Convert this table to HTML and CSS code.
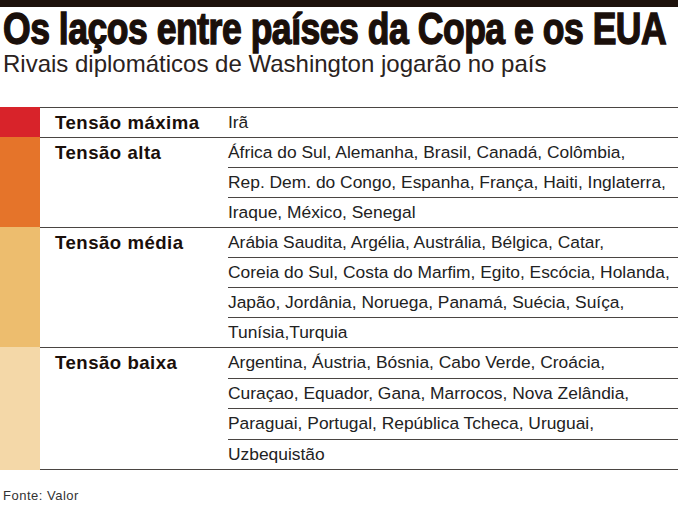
FILE: index.html
```html
<!DOCTYPE html>
<html lang="pt">
<head>
<meta charset="utf-8">
<link rel="stylesheet" href="styles.css">
</head>
<body>
<div class="page">
  <div class="topbar"></div>
  <h1 class="title"><span class="title-text">Os laços entre países da Copa e os EUA</span></h1>
  <p class="subtitle">Rivais diplomáticos de Washington jogarão no país</p>

  <div class="table">
    <div class="group">
      <div class="swatch max"></div>
      <div class="body">
        <div class="label">Tensão máxima</div>
        <div class="values">
          <div class="row">Irã</div>
        </div>
      </div>
    </div>
    <div class="group">
      <div class="swatch alta"></div>
      <div class="body">
        <div class="label">Tensão alta</div>
        <div class="values">
          <div class="row">África do Sul, Alemanha, Brasil, Canadá, Colômbia,</div>
          <div class="row">Rep. Dem. do Congo, Espanha, França, Haiti, Inglaterra,</div>
          <div class="row">Iraque, México, Senegal</div>
        </div>
      </div>
    </div>
    <div class="group">
      <div class="swatch media"></div>
      <div class="body">
        <div class="label">Tensão média</div>
        <div class="values">
          <div class="row">Arábia Saudita, Argélia, Austrália, Bélgica, Catar,</div>
          <div class="row">Coreia do Sul, Costa do Marfim, Egito, Escócia, Holanda,</div>
          <div class="row">Japão, Jordânia, Noruega, Panamá, Suécia, Suíça,</div>
          <div class="row">Tunísia,Turquia</div>
        </div>
      </div>
    </div>
    <div class="group last">
      <div class="swatch baixa"></div>
      <div class="body">
        <div class="label">Tensão baixa</div>
        <div class="values">
          <div class="row">Argentina, Áustria, Bósnia, Cabo Verde, Croácia,</div>
          <div class="row">Curaçao, Equador, Gana, Marrocos, Nova Zelândia,</div>
          <div class="row">Paraguai, Portugal, República Tcheca, Uruguai,</div>
          <div class="row">Uzbequistão</div>
        </div>
      </div>
    </div>
  </div>

  <p class="source">Fonte: Valor</p>
</div>
</body>
</html>
```
FILE: styles.css
```css
html, body {
  margin: 0;
  padding: 0;
  background: #ffffff;
}
.page {
  width: 678px;
  height: 506px;
  overflow: hidden;
  font-family: "Liberation Sans", Arial, sans-serif;
  color: #1d1410;
}
.topbar {
  height: 7px;
  background: #1e120c;
}
.title {
  margin: 0;
  padding-left: 3px;
  height: 41px;
  line-height: 41px;
  font-size: 44px;
  font-weight: bold;
  color: #1a0f0a;
  white-space: nowrap;
}
.title-text {
  display: inline-block;
  position: relative;
  top: 1px;
  line-height: 34px;
  letter-spacing: -0.6px;
  -webkit-text-stroke: 1.4px #1a0f0a;
  transform: scaleX(0.808);
  transform-origin: 0 50%;
}
.subtitle {
  margin: 0;
  padding-left: 3px;
  height: 34px;
  line-height: 31px;
  font-size: 24px;
  color: #2a2220;
  white-space: nowrap;
}
.table {
  margin-top: 25px;
  width: 678px;
}
.group {
  display: flex;
}
.swatch {
  width: 40px;
  flex: none;
}
.swatch.max { background: #d8232a; }
.swatch.alta { background: #e5742a; }
.swatch.media { background: #edbd6e; }
.swatch.baixa { background: #f4d8a8; }
.body {
  flex: 1;
  display: flex;
  border-top: 1px solid #4a4542;
}
.group.last .body {
  border-bottom: 1px solid #4a4542;
}
.label {
  width: 173px;
  padding-left: 15px;
  flex: none;
  height: 29px;
  line-height: 29px;
  font-size: 18.6px;
  letter-spacing: 0.5px;
  font-weight: bold;
  color: #1a0f0a;
}
.values {
  flex: 1;
}
.row {
  height: 29px;
  line-height: 29px;
  font-size: 17.4px;
  color: #222;
  white-space: nowrap;
}
.group.last .row {
  height: 29.5px;
  line-height: 29.5px;
}
.row + .row {
  border-top: 1px solid #4a4542;
}
.source {
  margin: 18px 0 0;
  padding-left: 3px;
  font-size: 13px;
  letter-spacing: 0.5px;
  color: #333;
}
```
